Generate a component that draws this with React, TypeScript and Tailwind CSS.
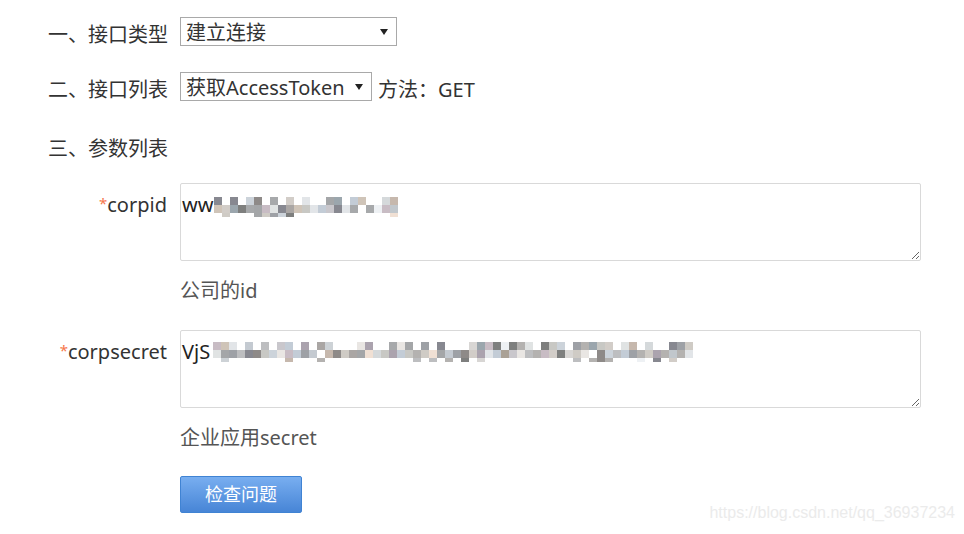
import { useState } from 'react';

// pixel blur over the secret values, drawn as 8px squares
const shades = [
  '#9ea1a6', '#d5d9db', '#c8bcc4', '#cfcbc5', '#e9e6e3', '#a4a6a8', '#cdd2d6', '#8e8a88',
  '#d2cdc8', '#e2e5e8', '#c3ccd6', '#c6b8ad', '#a7a9ab', '#9ba6ad', '#d8d6d4', '#ccd3da',
  '#eef1f4', '#f0e0d4', '#cfc4b8', '#c4cad1', '#aba3ae', '#c9c7cc', '#e0e3e3', '#b4b2b0',
  '#7e7f7e', '#aaa6a4', '#c1c7cc', '#aaa196', '#878890', '#bdbec0', '#c8c8c4',
];

const Mosaic = ({ cols, rows, seed }: { cols: number; rows: number; seed: number }) => {
  let s = seed;
  const next = () => {
    s = (s * 9301 + 49297) % 233280;
    return s / 233280;
  };
  const cells = [];
  for (let r = 0; r < rows; r++) {
    for (let c = 0; c < cols; c++) {
      const blank = r === 0 ? 0.35 : r === rows - 1 ? 0.75 : 0.05;
      if (next() < blank) continue;
      const fill = shades[Math.floor(next() * shades.length)];
      const h = r === rows - 1 ? 4 : 8;
      cells.push(<rect key={`${r}-${c}`} x={c * 8} y={r * 8} width={8} height={h} fill={fill} />);
    }
  }
  return (
    <svg width={cols * 8} height={rows * 8} className="block">
      {cells}
    </svg>
  );
};

const Select = ({ width, options }: { width: string; options: string[] }) => (
  <div className={`relative ${width} h-[29px]`}>
    <select className="appearance-none w-full h-full border border-[#a9a9a9] bg-white pl-[5px] pr-[20px] pt-[1px] leading-[27px] text-[#333] outline-none">
      {options.map((o) => (
        <option key={o}>{o}</option>
      ))}
    </select>
    <svg className="absolute right-[9px] top-[12px] pointer-events-none" width="8" height="6" viewBox="0 0 8 6">
      <path d="M0 0 L8 0 L4 6 Z" fill="#222" />
    </svg>
  </div>
);

const Field = ({
  label,
  value,
  help,
  cols,
  seed,
  blurLeft,
  blurTop,
}: {
  label: string;
  value: string;
  help: string;
  cols: number;
  seed: number;
  blurLeft: string;
  blurTop: string;
}) => {
  const [text, setText] = useState(value);
  return (
    <div className="flex items-start -ml-[48px]">
      <div className="w-[180px] pr-[13px] text-right leading-[29px] pt-[6px]">
        <span className="text-[#f6764a] text-[15px] align-[3px]">*</span>
        {label}
      </div>
      <div className="flex flex-col">
        <div className="relative">
          <textarea
            value={text}
            onChange={(e) => setText(e.target.value)}
            className="block w-[741px] h-[78px] border border-[#d9d9d9] rounded-[2px] pl-[1px] pt-[6px] leading-[29px] text-[#222] outline-none"
          />
          <div className={`absolute ${blurLeft} ${blurTop} pointer-events-none`}>
            <Mosaic cols={cols} rows={3} seed={seed} />
          </div>
        </div>
        <div className="mt-[15px] leading-[29px] text-[#555]">{help}</div>
      </div>
    </div>
  );
};

export default function App() {
  return (
    <div className="relative min-h-[534px] bg-white pl-[48px] pt-[17px] text-[20px] text-[#333] font-['Noto_Sans','Noto_Sans_CJK_SC',sans-serif]">
      <div className="flex items-start">
        <div className="w-[132px] leading-[29px] pt-[3px]">一、接口类型</div>
        <Select width="w-[217px]" options={['建立连接']} />
      </div>

      <div className="flex items-start mt-[23px]">
        <div className="w-[132px] leading-[29px] pt-[3px]">二、接口列表</div>
        <Select width="w-[192px]" options={['获取AccessToken']} />
        <div className="ml-[6px] leading-[29px] pt-[3px]">方法：GET</div>
      </div>

      <div className="mt-[30px] leading-[29px]">三、参数列表</div>

      <div className="mt-[20px] flex flex-col gap-[25px]">
        <Field label="corpid" value="ww" help="公司的id" cols={23} seed={17} blurLeft="left-[34px]" blurTop="top-[14px]" />
        <Field label="corpsecret" value="VjS" help="企业应用secret" cols={60} seed={83} blurLeft="left-[33px]" blurTop="top-[12px]" />
      </div>

      <button className="mt-[24px] ml-[132px] w-[122px] h-[37px] rounded-[2px] border border-[#4083d3] bg-gradient-to-b from-[#78aef0] to-[#4785d6] text-white text-[18px] leading-[35px]">
        检查问题
      </button>

      <div className="absolute right-[9px] bottom-[9px] text-[16px] text-[#ebebeb] font-['Liberation_Sans',Arial,sans-serif]">
        https://blog.csdn.net/qq_36937234
      </div>
    </div>
  );
}
